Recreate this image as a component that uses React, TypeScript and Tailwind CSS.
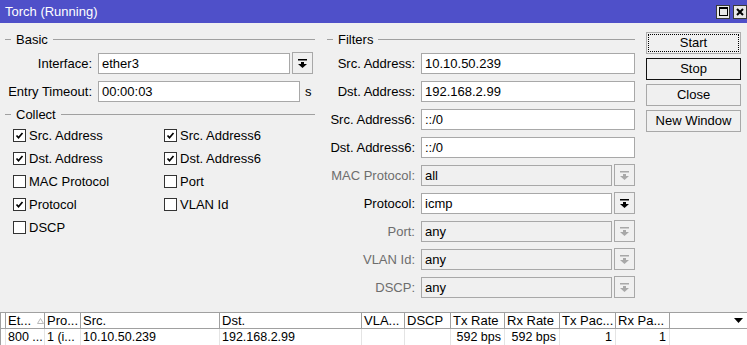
import React from "react";

type Filter = {
  label: string;
  value: string;
  dropdown?: boolean;
  disabled?: boolean;
};

const filters: Filter[] = [
  { label: "Src. Address:", value: "10.10.50.239" },
  { label: "Dst. Address:", value: "192.168.2.99" },
  { label: "Src. Address6:", value: "::/0" },
  { label: "Dst. Address6:", value: "::/0" },
  { label: "MAC Protocol:", value: "all", dropdown: true, disabled: true },
  { label: "Protocol:", value: "icmp", dropdown: true },
  { label: "Port:", value: "any", dropdown: true, disabled: true },
  { label: "VLAN Id:", value: "any", dropdown: true, disabled: true },
  { label: "DSCP:", value: "any", dropdown: true, disabled: true },
];

const collect: [string, boolean][][] = [
  [["Src. Address", true], ["Src. Address6", true]],
  [["Dst. Address", true], ["Dst. Address6", true]],
  [["MAC Protocol", false], ["Port", false]],
  [["Protocol", true], ["VLAN Id", false]],
  [["DSCP", false]],
];

// column widths are taken from the header separators
const columns = [
  { name: "Et...", w: "w-[39px]", value: "800 ...", right: false },
  { name: "Pro...", w: "w-[36px]", value: "1 (i...", right: false },
  { name: "Src.", w: "w-[139px]", value: "10.10.50.239", right: false },
  { name: "Dst.", w: "w-[142px]", value: "192.168.2.99", right: false },
  { name: "VLA...", w: "w-[43px]", value: "", right: false },
  { name: "DSCP", w: "w-[46px]", value: "", right: false },
  { name: "Tx Rate", w: "w-[54px]", value: "592 bps", right: true },
  { name: "Rx Rate", w: "w-[55px]", value: "592 bps", right: true },
  { name: "Tx Pac...", w: "w-[56px]", value: "1", right: true },
  { name: "Rx Pa...", w: "w-[54px]", value: "1", right: true },
];

function DropIcon({ disabled }: { disabled?: boolean }) {
  const c = disabled ? "#a8a8a8" : "#000";
  return (
    <svg width="9" height="9" viewBox="0 0 9 9">
      <rect x="0" y="0" width="9" height="1.5" fill={c} />
      <rect x="3" y="3" width="3" height="2" fill={c} />
      <polygon points="0,5 9,5 4.5,9" fill={c} />
    </svg>
  );
}

function DropButton({ disabled }: { disabled?: boolean }) {
  return (
    <div className="w-[21px] h-[22px] ml-[2px] border border-[#a8a8a8] bg-[#f0f0f0] flex items-center justify-center">
      <DropIcon disabled={disabled} />
    </div>
  );
}

function Legend({ title }: { title: string }) {
  return (
    <div className="h-[16px] flex items-center">
      <div className="w-[6px] h-px bg-[#a0a0a0]" />
      <span className="ml-[5px] mr-[5px] leading-none">{title}</span>
      <div className="flex-1 h-px bg-[#a0a0a0]" />
    </div>
  );
}

function Checkbox({ label, checked }: { label: string; checked: boolean }) {
  return (
    <div className="flex items-center">
      <div className="w-[13px] h-[13px] border border-[#333] bg-white flex items-center justify-center">
        {checked && (
          <svg width="9" height="9" viewBox="0 0 9 9">
            <path d="M1.5 4.5 L3.5 6.8 L7.5 2" stroke="#000" strokeWidth="1.7" fill="none" />
          </svg>
        )}
      </div>
      <span className="ml-[3px] pt-px">{label}</span>
    </div>
  );
}

function WinButton({ label, kind }: { label: string; kind: "focus" | "default" | "plain" }) {
  if (kind === "focus") {
    return (
      <div className="h-[22px] border border-[#adadad] bg-[#f0f0f0] p-px">
        <div className="h-full border border-dotted border-black flex items-center justify-center">{label}</div>
      </div>
    );
  }
  return (
    <div
      className={
        kind === "default"
          ? "h-[22px] border-[1.5px] border-[#111] bg-[#f0f0f0] flex items-center justify-center"
          : "h-[22px] border-[1.5px] border-[#a8a8a8] bg-[#f0f0f0] flex items-center justify-center"
      }
    >
      {label}
    </div>
  );
}

export default function App() {
  return (
    <div className="w-[747px] h-[345px] overflow-hidden bg-[#f0f0f0] flex flex-col font-['Liberation_Sans',Arial,sans-serif] text-[13px] text-black">
      {/* title bar */}
      <div className="h-[23px] shrink-0 bg-[#4f50c9] flex items-center justify-between pl-[5px]">
        <span className="text-white text-[13px]">Torch (Running)</span>
        <div className="flex items-center gap-[3px]">
          <div className="w-[14px] h-[14px] border border-[#3a3a3a] bg-[#e8e8e8] flex items-center justify-center">
            <div className="w-[9px] h-[9px] border border-black border-t-2" />
          </div>
          <div className="w-[14px] h-[14px] border border-[#3a3a3a] bg-[#e8e8e8] flex items-center justify-center">
            <svg width="8" height="8" viewBox="0 0 8 8">
              <path d="M1 1 L7 7 M7 1 L1 7" stroke="#000" strokeWidth="2" />
            </svg>
          </div>
        </div>
      </div>

      <div className="h-[289px] shrink-0 flex pl-[5px] pt-[8px]">
        {/* Basic + Collect */}
        <div className="w-[310px]">
          <Legend title="Basic" />
          <div className="flex items-center h-[22px] mt-[5px]">
            <span className="w-[87px] text-right pt-px">Interface:</span>
            <div className="ml-[6px] w-[192px] h-[21px] bg-white border border-[#a8a8a8] pl-[3px] pt-px flex items-center">ether3</div>
            <DropButton />
          </div>
          <div className="flex items-center h-[22px] mt-[6px]">
            <span className="w-[87px] text-right pt-px">Entry Timeout:</span>
            <div className="ml-[6px] w-[202px] h-[21px] bg-white border border-[#a8a8a8] pl-[3px] pt-px flex items-center">00:00:03</div>
            <span className="ml-[5px] pt-px">s</span>
          </div>
          <div className="mt-[4px]">
            <Legend title="Collect" />
          </div>
          <div className="mt-[2px] pl-[8px]">
            {collect.map((row, i) => (
              <div key={i} className="h-[23px] flex items-center">
                {row.map(([label, checked]) => (
                  <div key={label} className="w-[154px]">
                    <Checkbox label={label} checked={checked} />
                  </div>
                ))}
              </div>
            ))}
          </div>
        </div>

        {/* Filters */}
        <div className="w-[308px] ml-[12px]">
          <Legend title="Filters" />
          <div className="mt-[5px] flex flex-col gap-[6px]">
            {filters.map((f) => (
              <div key={f.label} className="flex items-center h-[22px]">
                <span className={f.disabled ? "w-[88px] text-right pt-px text-[#6d6d6d]" : "w-[88px] text-right pt-px"}>{f.label}</span>
                <div
                  className={
                    (f.dropdown ? "w-[191px] " : "w-[214px] ") +
                    (f.disabled ? "bg-[#f0f0f0] " : "bg-white ") +
                    "ml-[6px] h-[21px] border border-[#a8a8a8] pl-[3px] pt-px flex items-center"
                  }
                >
                  {f.value}
                </div>
                {f.dropdown && <DropButton disabled={f.disabled} />}
              </div>
            ))}
          </div>
        </div>

        {/* buttons */}
        <div className="w-[95px] ml-[11px] pt-px flex flex-col gap-[4px]">
          <WinButton label="Start" kind="focus" />
          <WinButton label="Stop" kind="default" />
          <WinButton label="Close" kind="plain" />
          <WinButton label="New Window" kind="plain" />
        </div>
      </div>

      {/* table */}
      <div className="flex-1 bg-white border-l border-[#a0a0a0] text-[12px]">
        <div className="h-[17px] flex border-t border-b border-[#a0a0a0] text-[13px]">
          <div className="w-[5px] border-r border-[#a0a0a0]" />
          {columns.map((c, i) => (
            <div key={c.name} className={c.w + " border-r border-[#a0a0a0] pl-[2px] flex items-center whitespace-nowrap overflow-hidden"}>
              {c.name}
              {i === 0 && (
                <svg className="ml-[6px] shrink-0" width="7" height="6" viewBox="0 0 7 6">
                  <path d="M3.5 0.5 L6.5 5.5 L0.5 5.5 Z" fill="none" stroke="#b8b8b8" strokeWidth="1" />
                </svg>
              )}
            </div>
          ))}
          <div className="flex-1 flex items-center justify-end pr-[4px]">
            <svg width="9" height="5" viewBox="0 0 9 5">
              <polygon points="0,0 9,0 4.5,5" fill="#000" />
            </svg>
          </div>
        </div>
        <div className="h-[16px] flex text-[12.5px]">
          <div className="w-[5px] border-r border-[#e4e4e4]" />
          {columns.map((c) => (
            <div
              key={c.name}
              className={
                c.w +
                (c.right ? " justify-end pr-[3px]" : " pl-[2px]") +
                " border-r border-[#e4e4e4] flex items-center whitespace-nowrap overflow-hidden"
              }
            >
              {c.value}
            </div>
          ))}
        </div>
      </div>
    </div>
  );
}
